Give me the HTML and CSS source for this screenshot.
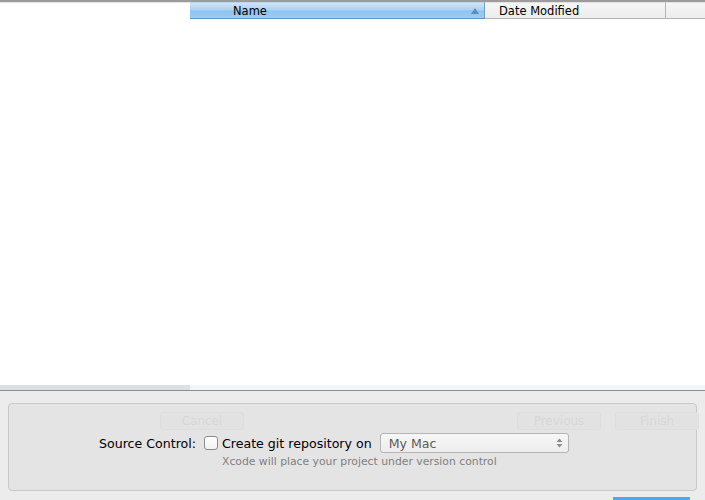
FILE: index.html
```html
<!DOCTYPE html>
<html>
<head>
<meta charset="utf-8">
<link rel="stylesheet" href="styles.css">
</head>
<body>
<div class="window">
  <div class="browser">
    <div class="sidebar">
      <div class="sidebar-fill"></div>
      <div class="sidebar-foot"></div>
    </div>
    <div class="files">
      <div class="header">
        <div class="col col-name"><span>Name</span><span class="sort"></span></div>
        <div class="col col-date"><span>Date Modified</span></div>
        <div class="col col-rest"></div>
      </div>
      <div class="list"></div>
      <div class="files-foot"></div>
    </div>
  </div>
  <div class="bottom">
    <div class="panel">
      <div class="ghosts">
        <div class="ghost ghost-cancel">Cancel</div>
        <div class="ghost-right">
          <div class="ghost">Previous</div>
          <div class="ghost">Finish</div>
        </div>
      </div>
      <div class="form-row">
        <span class="label">Source Control:</span>
        <span class="checkbox"></span>
        <span class="check-label">Create git repository on</span>
        <div class="popup">
          <span>My Mac</span>
          <svg class="arrows" width="7" height="10" viewBox="0 0 7 10"><path d="M3.5 0.5 L6.5 4 L0.5 4 Z" fill="#8a8a8a"/><path d="M3.5 9.5 L6.5 6 L0.5 6 Z" fill="#8a8a8a"/></svg>
        </div>
      </div>
      <div class="hint">Xcode will place your project under version control</div>
    </div>
    <div class="default-btn"></div>
  </div>
</div>
</body>
</html>
```
FILE: styles.css
```css
* { box-sizing: border-box; }
html, body { margin: 0; padding: 0; }
body {
  width: 705px;
  height: 500px;
  overflow: hidden;
  background: #ececec;
  font-family: "DejaVu Sans", "Noto Sans", sans-serif;
}
.window { display: flex; flex-direction: column; height: 500px; }
.browser {
  display: flex;
  height: 391px;
  border-top: 2px solid #9c9c9c;
  border-bottom: 1px solid #8e8e8e;
  background: #fff;
}
.sidebar {
  width: 190px;
  display: flex;
  flex-direction: column;
  border-top: 1px solid #e4e4e4;
}
.sidebar-fill { flex: 1; background: #fff; }
.sidebar-foot { height: 5px; background: #dcdfe4; }
.files { flex: 1; display: flex; flex-direction: column; }
.header {
  display: flex;
  height: 17px;
  font-size: 11.5px;
  color: #000;
}
.col { display: flex; align-items: center; border-bottom: 1px solid #b4b4b4; }
.col-name {
  width: 295px;
  padding-left: 43px;
  padding-right: 4px;
  justify-content: space-between;
  background: linear-gradient(#cfe5f9, #a9d2f4 45%, #8ec4ef 55%, #9dccf1);
  border-bottom: 1px solid #5f98cf;
  border-right: 1px solid #6aa0d0;
  border-top: 1px solid #b9d6ee;
}
.sort {
  width: 0; height: 0;
  border-left: 4px solid transparent;
  border-right: 4px solid transparent;
  border-bottom: 6px solid #5e8cba;
  margin-right: 1px;
}
.col-date {
  width: 181px;
  padding-left: 14px;
  background: linear-gradient(#f6f6f6, #ececec);
  border-right: 1px solid #b6b6b6;
  border-top: 1px solid #e2e2e2;
}
.col-rest {
  flex: 1;
  background: linear-gradient(#f6f6f6, #ececec);
  border-top: 1px solid #e2e2e2;
}
.list { flex: 1; background: #fff; }
.files-foot { height: 5px; background: #f1f4f9; }
.bottom {
  flex: 1;
  padding: 12px 8px 0 8px;
  position: relative;
}
.panel {
  height: 88px;
  background: #e4e4e4;
  border: 1px solid #c9c9c9;
  border-radius: 4px;
  padding: 8px 0 0 0;
}
.ghosts {
  display: flex;
  justify-content: space-between;
  height: 18px;
  padding-left: 151px;
}
.ghost {
  width: 84px;
  height: 18px;
  border: 1px solid #dedede;
  border-radius: 3px;
  background: #e2e2e2;
  color: #d8d8d8;
  font-size: 12px;
  text-align: center;
  line-height: 16px;
}
.ghost-right { display: flex; gap: 14px; margin-right: -3px; }
.form-row {
  display: flex;
  align-items: center;
  margin-top: 3px;
  height: 20px;
  font-size: 12.6px;
  color: #000;
}
.label { width: 187px; text-align: right; }
.checkbox {
  width: 14px;
  height: 14px;
  margin-left: 8px;
  border: 1px solid #8c8c8c;
  border-radius: 3px;
  background: linear-gradient(#ffffff, #f0f0f0);
}
.check-label { margin-left: 4px; }
.popup {
  margin-left: 8px;
  width: 189px;
  height: 20px;
  border: 1px solid #b5b5b5;
  border-radius: 3px;
  background: linear-gradient(#f7f7f7, #ededed);
  display: flex;
  align-items: center;
  justify-content: space-between;
  padding: 0 5px 0 8px;
  color: #5c5c5c;
}
.hint {
  margin-left: 213px;
  margin-top: 2px;
  font-size: 10.8px;
  color: #7f7f7f;
}
.default-btn {
  position: absolute;
  left: 613px;
  top: 106px;
  width: 77px;
  height: 4px;
  background: #4aa8f0;
}
```
